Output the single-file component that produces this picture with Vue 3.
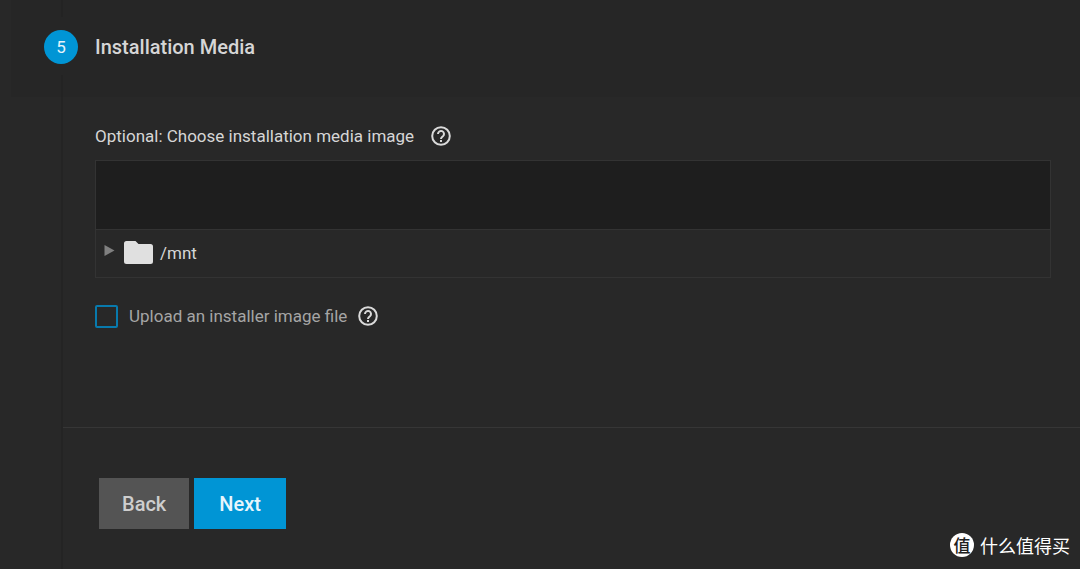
<script setup>
import { ref } from 'vue'

const path = ref('')
const upload = ref(false)
</script>

<template>
  <main class="wizard">
    <header class="step-header">
      <span class="step-number">5</span>
      <h1 class="step-title">Installation Media</h1>
    </header>

    <form class="step-body" @submit.prevent>
      <section class="fields">
        <div class="label-row">
          <label for="media-path">Optional: Choose installation media image</label>
          <button class="help" type="button" aria-label="Help for installation media image">
            <svg viewBox="0 0 20 20"><circle cx="10" cy="10" r="8.8" /><path d="M7 8a3 3 0 1 1 5.1 2.1C11 11.2 10 11.6 10 13" /><path d="M10 14v2" /></svg>
          </button>
        </div>

        <div class="explorer">
          <input id="media-path" v-model="path" class="path-input" type="text" />
          <div class="tree-row">
            <button class="expander" type="button" aria-label="Expand /mnt">
              <svg viewBox="0 0 10 11"><path d="M0 0 10 5.5 0 11Z" /></svg>
            </button>
            <svg class="folder" viewBox="0 0 29 23"><path d="M2.5 0h9l3 3h12A2.5 2.5 0 0 1 29 5.5v15a2.5 2.5 0 0 1-2.5 2.5h-24A2.5 2.5 0 0 1 0 20.5v-18A2.5 2.5 0 0 1 2.5 0Z" /></svg>
            <span class="node-name">/mnt</span>
          </div>
        </div>

        <div class="upload-row">
          <input id="upload" v-model="upload" class="checkbox" type="checkbox" />
          <label for="upload">Upload an installer image file</label>
          <button class="help" type="button" aria-label="Help for upload">
            <svg viewBox="0 0 20 20"><circle cx="10" cy="10" r="8.8" /><path d="M7 8a3 3 0 1 1 5.1 2.1C11 11.2 10 11.6 10 13" /><path d="M10 14v2" /></svg>
          </button>
        </div>
      </section>

      <footer class="actions">
        <button class="btn back" type="button">Back</button>
        <button class="btn next" type="submit">Next</button>
      </footer>
    </form>

    <div class="brand">
      <span class="brand-mark">值</span>
      <span>什么值得买</span>
    </div>
  </main>
</template>

<style>
body {
  background: #282828;
}
</style>

<style scoped>
.wizard {
  position: relative;
  display: flex;
  flex-direction: column;
  box-sizing: border-box;
  min-height: 100vh;
  padding-left: 11px;
  background: #282828;
  color: #d6d6d6;
  font-family: Roboto, "Noto Sans CJK SC", sans-serif;
  font-size: 17px;
  line-height: 24px;
}
.step-header {
  display: flex;
  align-items: center;
  gap: 17px;
  box-sizing: border-box;
  height: 97px;
  padding: 0 33px 4px;
  background:
    linear-gradient(#232323, #232323) 50px 0 / 2px 17px no-repeat,
    linear-gradient(#232323, #232323) 50px 75px / 2px 22px no-repeat,
    #262626;
}
.step-number {
  display: flex;
  align-items: center;
  justify-content: center;
  width: 34px;
  height: 34px;
  border-radius: 50%;
  background: #0095d5;
  color: #e6f4fb;
}
.step-title {
  margin: 0;
  font-size: 20px;
  font-weight: 500;
}
.step-body {
  flex: 1;
  margin-left: 50px;
  border-left: 2px solid #242424;
}
.fields {
  box-sizing: border-box;
  min-height: 331px;
  padding: 27px 29px 0 32px;
  border-bottom: 1px solid #363636;
}
.label-row {
  display: flex;
  align-items: center;
  gap: 17px;
  margin-bottom: 12px;
}
.help {
  display: flex;
  padding: 0;
  border: 0;
  background: none;
}
.help svg {
  width: 20px;
  height: 20px;
  fill: none;
  stroke: #dadada;
  stroke-width: 2;
}
.explorer {
  border: 1px solid #333333;
}
.path-input {
  display: block;
  box-sizing: border-box;
  width: 100%;
  height: 69px;
  padding: 0 12px;
  border: 0;
  border-bottom: 1px solid #333333;
  outline: 0;
  background: #1e1e1e;
  color: #dadada;
  font: inherit;
}
.tree-row {
  display: flex;
  align-items: center;
  box-sizing: border-box;
  height: 47px;
  padding: 0 8px 2px;
}
.expander {
  display: flex;
  margin-right: 9px;
  padding: 0 0 4px;
  border: 0;
  background: none;
}
.expander svg {
  width: 11px;
  height: 11px;
  fill: #808080;
}
.folder {
  width: 29px;
  height: 23px;
  margin-right: 7px;
  fill: #e0e0e0;
}
.upload-row {
  display: flex;
  align-items: center;
  margin-top: 26px;
  color: #a5a5a5;
}
.checkbox {
  appearance: none;
  box-sizing: border-box;
  width: 23px;
  height: 23px;
  margin: 0 11px 0 0;
  border: 2px solid #087aad;
  border-radius: 2px;
}
.checkbox:checked {
  background: #087aad;
}
.upload-row .help {
  margin-left: 11px;
}
.actions {
  display: flex;
  gap: 5px;
  padding: 50px 0 0 36px;
}
.btn {
  height: 51px;
  padding: 0 23px;
  border: 0;
  font: 500 20px/24px Roboto, sans-serif;
}
.back {
  background: #545454;
  color: #cecece;
}
.next {
  padding: 0 25px;
  background: #0095d5;
  color: #e8f6fc;
}
.brand {
  position: absolute;
  right: 10px;
  bottom: 12px;
  display: flex;
  align-items: center;
  gap: 6px;
  color: #ffffff;
  font-family: "Noto Sans CJK SC", sans-serif;
  font-size: 18px;
}
.brand-mark {
  display: flex;
  align-items: center;
  justify-content: center;
  width: 24px;
  height: 24px;
  border-radius: 50%;
  background: #ffffff;
  color: #202020;
  font-size: 17px;
  font-weight: 500;
}
</style>
